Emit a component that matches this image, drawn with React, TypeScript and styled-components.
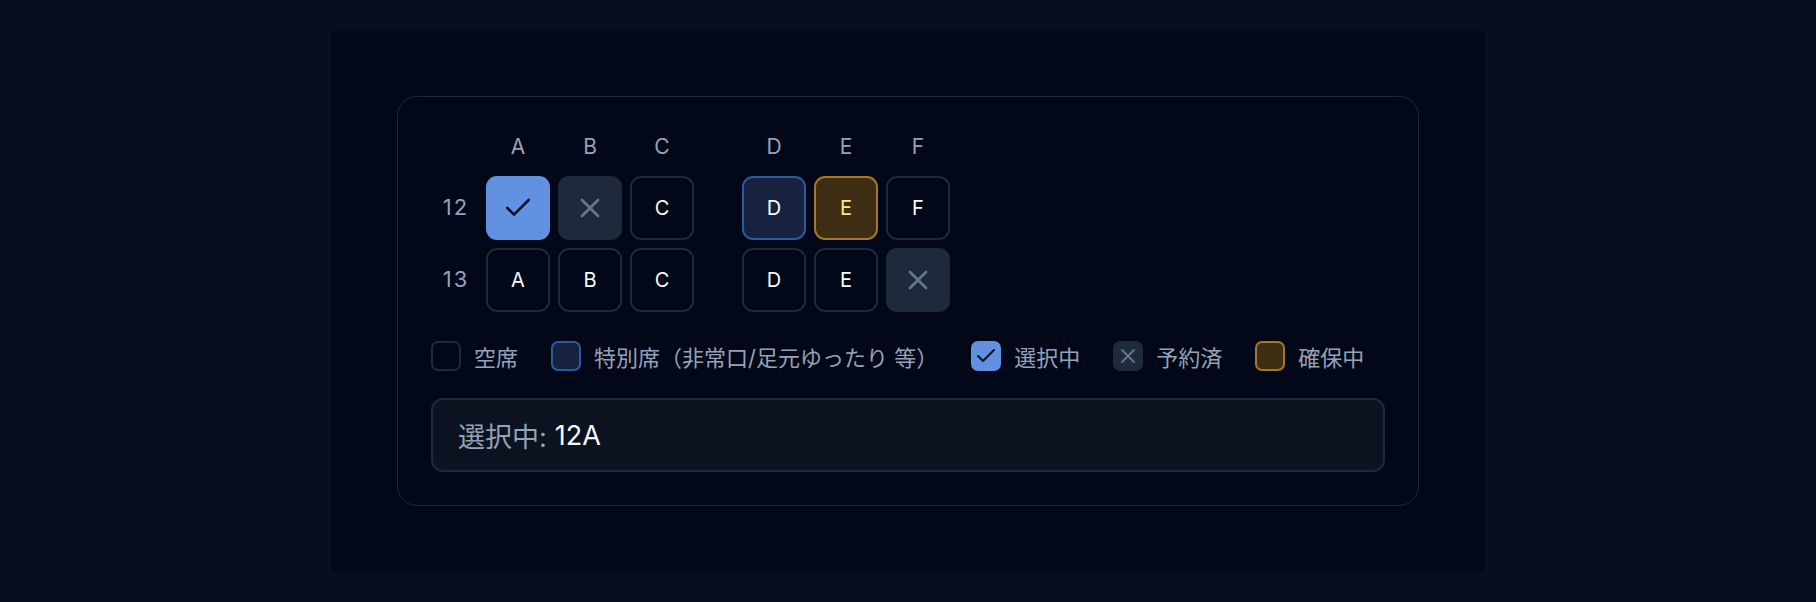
import {Fragment} from "react";
import styled, {createGlobalStyle, css} from "styled-components";
import {Check, X} from "lucide-react";

type SeatStatus = "available" | "special" | "selected" | "reserved" | "held";

interface SeatRow {
    row: number;
    seats: SeatStatus[];
}

const LEFT_COLUMNS = ["A", "B", "C"];
const RIGHT_COLUMNS = ["D", "E", "F"];
const COLUMNS = [...LEFT_COLUMNS, ...RIGHT_COLUMNS];

const ROWS: SeatRow[] = [
    {row: 12, seats: ["selected", "reserved", "available", "special", "held", "available"]},
    {row: 13, seats: ["available", "available", "available", "available", "available", "reserved"]},
];

const LEGEND: { status: SeatStatus; label: string }[] = [
    {status: "available", label: "空席"},
    {status: "special", label: "特別席（非常口/足元ゆったり 等）"},
    {status: "selected", label: "選択中"},
    {status: "reserved", label: "予約済"},
    {status: "held", label: "確保中"},
];

const SeatIcon = ({status, size}: { status: SeatStatus; size: number }) => {
    if (status === "selected") return <Check size={size} strokeWidth={2} color="#0b1324"/>;
    if (status === "reserved") return <X size={size} strokeWidth={2} color="#64748b"/>;
    return null;
};

const SeatButton = ({status, column}: { status: SeatStatus; column: string }) => (
    <Seat $status={status} disabled={status === "reserved"}>
        {status === "selected" || status === "reserved"
            ? <SeatIcon status={status} size={32}/>
            : column}
    </Seat>
);

const App = () => {
    const renderSeats = (row: SeatRow) => (
        <Fragment key={row.row}>
            <RowLabel>{row.row}</RowLabel>
            {row.seats.map((status, index) => (
                <Fragment key={COLUMNS[index]}>
                    {index === LEFT_COLUMNS.length && <Aisle/>}
                    <SeatButton status={status} column={COLUMNS[index]}/>
                </Fragment>
            ))}
        </Fragment>
    );

    return (
        <>
            <GlobalStyle/>
            <Page>
                <Stage>
                    <Card>
                        <SeatGrid>
                            <span/>
                            {LEFT_COLUMNS.map((c) => <ColumnHeader key={c}>{c}</ColumnHeader>)}
                            <Aisle/>
                            {RIGHT_COLUMNS.map((c) => <ColumnHeader key={c}>{c}</ColumnHeader>)}
                            {ROWS.map(renderSeats)}
                        </SeatGrid>

                        <Legend>
                            {LEGEND.map((item) => (
                                <LegendItem key={item.status}>
                                    <Swatch $status={item.status}>
                                        <SeatIcon status={item.status} size={24}/>
                                    </Swatch>
                                    {item.label}
                                </LegendItem>
                            ))}
                        </Legend>

                        <Summary>
                            <SummaryLabel>選択中:</SummaryLabel>
                            <SummaryValue>12A</SummaryValue>
                        </Summary>
                    </Card>
                </Stage>
            </Page>
        </>
    );
};

export default App;


const GlobalStyle = createGlobalStyle`
    * {
        box-sizing: border-box;
    }

    body {
        margin: 0;
        background: #080e1d;
        font-family: Inter, "Noto Sans CJK JP", sans-serif;
    }
`;

const statusStyles: Record<SeatStatus, ReturnType<typeof css>> = {
    available: css`
        background: transparent;
        border-color: #1e293b;
        color: #f8fafc;
    `,
    special: css`
        background: #162240;
        border-color: #2c5a9c;
        color: #f8fafc;
    `,
    selected: css`
        background: #6291e2;
        border-color: #6291e2;
        color: #0b1324;
    `,
    reserved: css`
        background: #1e293b;
        border-color: #1e293b;
        color: #64748b;
    `,
    held: css`
        background: #3d2d13;
        border-color: #a67826;
        color: #fde68a;
    `,
};

const Page = styled.div`
    display: flex;
    justify-content: center;
    padding: 31px 32px;
    min-height: 602px;
`;

const Stage = styled.div`
    width: 1154px;
    padding: 65px 66px;
    background: #020817;
`;

const Card = styled.section`
    display: flex;
    flex-direction: column;
    gap: 26px;
    padding: 33px;
    border: 1px solid #1e293b;
    border-radius: 20px;
`;

const SeatGrid = styled.div`
    display: grid;
    grid-template-columns: 47px repeat(3, 64px) 32px repeat(3, 64px);
    grid-template-rows: 38px 64px 64px;
    gap: 8px;
    margin-bottom: 2px;
`;

const ColumnHeader = styled.span`
    height: 32px;
    display: flex;
    align-items: center;
    justify-content: center;
    font-size: 21px;
    color: #94a3b8;
`;

const RowLabel = styled.span`
    display: flex;
    align-items: center;
    justify-content: center;
    padding: 0 0 3px 3px;
    font-size: 22px;
    letter-spacing: 2px;
    color: #94a3b8;
`;

const Aisle = styled.span`
    width: 32px;
`;

const Seat = styled.button<{ $status: SeatStatus }>`
    width: 64px;
    height: 64px;
    display: flex;
    align-items: center;
    justify-content: center;
    padding: 0;
    border: 2px solid;
    border-radius: 11px;
    font-family: inherit;
    font-size: 20px;
    font-weight: 400;
    cursor: ${(props) => (props.$status === "reserved" ? "default" : "pointer")};
    ${(props) => statusStyles[props.$status]};
`;

const Legend = styled.div`
    display: flex;
    align-items: center;
    gap: 33px;
    height: 32px;
`;

const LegendItem = styled.div`
    display: flex;
    align-items: center;
    gap: 13px;
    font-size: 22px;
    color: #94a3b8;
`;

const Swatch = styled.span<{ $status: SeatStatus }>`
    width: 30px;
    height: 30px;
    display: flex;
    align-items: center;
    justify-content: center;
    border: 2px solid;
    border-radius: 7px;
    ${(props) => statusStyles[props.$status]};
`;

const Summary = styled.div`
    height: 74px;
    display: flex;
    align-items: center;
    gap: 8px;
    padding: 0 25px;
    background: #0b1220;
    border: 2px solid #1e293b;
    border-radius: 12px;
    font-size: 27px;
`;

const SummaryLabel = styled.span`
    color: #94a3b8;
`;

const SummaryValue = styled.span`
    color: #f8fafc;
    font-weight: 400;
`;
